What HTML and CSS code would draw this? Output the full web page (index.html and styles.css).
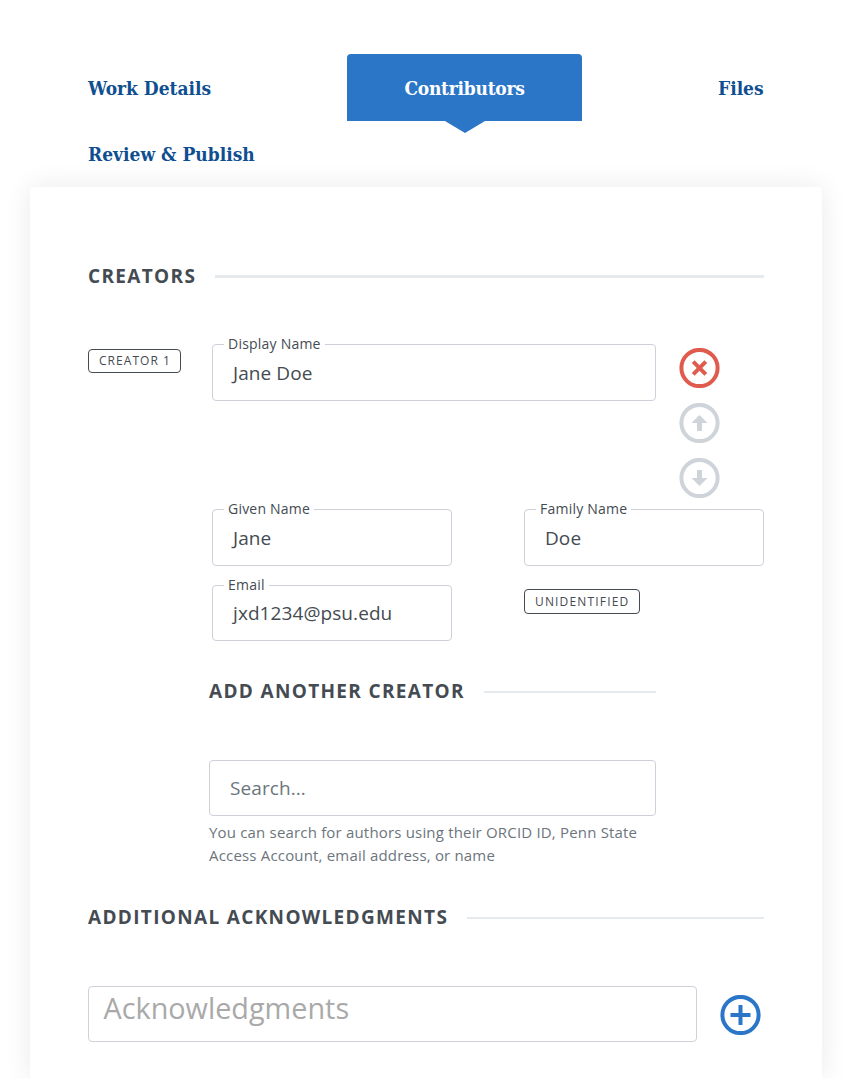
FILE: index.html
```html
<!DOCTYPE html>
<html lang="en">
<head>
<meta charset="utf-8">
<title>Contributors</title>
<link rel="stylesheet" href="styles.css">
</head>
<body>
<nav class="tabs">
  <a class="tab">Work Details</a>
  <a class="tab active">Contributors</a>
  <a class="tab files">Files</a>
  <a class="tab review">Review &amp; Publish</a>
</nav>
<main class="card">
  <h2 class="heading thick"><span>Creators</span></h2>
  <section class="creator">
    <div><span class="badge number">Creator 1</span></div>
    <div class="fields">
      <div class="top">
        <label class="field"><span class="label">Display Name</span><span class="value">Jane Doe</span></label>
        <div class="actions">
          <svg class="icon remove" viewBox="0 0 40 40"><circle cx="20" cy="20" r="18.100"/><path d="M13.700 13.700l12.600 12.600M26.300 13.700L13.700 26.300"/></svg>
          <svg class="icon move" viewBox="0 0 40 40"><circle cx="20" cy="20" r="18.100"/><path class="solid" d="M20 12l8 8h-5.500v8h-5v-8H12z"/></svg>
          <svg class="icon move" viewBox="0 0 40 40"><circle cx="20" cy="20" r="18.100"/><path class="solid" d="M20 28l8-8h-5.500v-8h-5v8H12z"/></svg>
        </div>
      </div>
      <div class="pair">
        <label class="field"><span class="label">Given Name</span><span class="value">Jane</span></label>
        <label class="field"><span class="label">Family Name</span><span class="value">Doe</span></label>
        <label class="field email"><span class="label">Email</span><span class="value">jxd1234@psu.edu</span></label>
        <div><span class="badge status">Unidentified</span></div>
      </div>
    </div>
  </section>
  <section class="add">
    <h2 class="heading"><span>Add Another Creator</span></h2>
    <div class="field search"><span class="value">Search...</span></div>
    <p class="help">You can search for authors using their ORCID ID, Penn State Access Account, email address, or name</p>
  </section>
  <h2 class="heading ack-title"><span>Additional Acknowledgments</span></h2>
  <div class="ack">
    <div class="field"><span class="placeholder">Acknowledgments</span></div>
    <svg class="icon plus" viewBox="0 0 40 40"><circle cx="20" cy="20" r="18.100"/><path d="M20 10v20M10 20h20"/></svg>
  </div>
</main>
</body>
</html>
```
FILE: styles.css
```css
* { box-sizing: border-box; }
body {
  margin: 0;
  height: 1079px;
  overflow: hidden;
  padding: 54px 25px 0 30px;
  background: #fff;
  color: #444b52;
  font-family: "Open Sans", sans-serif;
}
.tabs {
  display: flex;
  flex-wrap: wrap;
  justify-content: space-between;
  align-content: flex-start;
  column-gap: 57px;
  height: 133px;
  padding: 0 58px;
  font: bold 19px/69px "Roboto Slab", "DejaVu Serif Condensed", "DejaVu Serif", serif;
  color: #0f4f91;
}
.tab { height: 67px; width: 123px; white-space: nowrap; }
.tab.active {
  position: relative;
  width: 235px;
  text-align: center;
  letter-spacing: -.25px;
  color: #fff;
  background: #2b76c7;
  border-radius: 4px 4px 0 0;
}
.tab.active::after {
  content: "";
  position: absolute;
  left: 98px;
  top: 67px;
  border: solid transparent;
  border-width: 12px 20px 0;
  border-top-color: #2b76c7;
}
.tab.files { width: 46px; }
.tab.review { width: 167px; height: 66px; line-height: 67px; }
.card {
  height: 892px;
  padding: 74px 58px 0;
  border-radius: 4px 4px 0 0;
  background: #fff;
  box-shadow: 0 0 28px rgba(0, 0, 0, .085);
}
.heading {
  display: flex;
  align-items: center;
  gap: 19px;
  height: 28px;
  margin: 0;
  font-size: 19px;
  line-height: 28px;
  font-weight: 700;
  letter-spacing: 1.33px;
  text-transform: uppercase;
  white-space: nowrap;
}
.heading::after {
  content: "";
  flex: 1;
  height: 2px;
  margin-top: 2px;
  background: #e7eaed;
}
.heading.thick span { padding-top: 2px; }
.heading.thick::after { height: 3px; }
.creator {
  display: grid;
  grid-template-columns: 124px 552px;
  margin-top: 55px;
}
.badge {
  display: flex;
  align-items: center;
  padding-left: 10px;
  border: 1px solid #444b52;
  border-radius: 4px;
  font-size: 12px;
  line-height: 20px;
  letter-spacing: 1.04px;
  text-transform: uppercase;
}
.number { width: 93px; height: 24px; margin-top: 5px; }
.status { width: 116px; height: 25px; margin-top: 4px; letter-spacing: 1.16px; }
.top {
  display: grid;
  grid-template-columns: 444px 41px;
  gap: 23px;
  height: 165px;
}
.field {
  position: relative;
  display: block;
  height: 57px;
  padding: 0 20px;
  border: 1px solid #ced1d9;
  border-radius: 4px;
}
.label {
  position: absolute;
  left: 11px;
  top: -11px;
  padding: 0 4px;
  background: #fff;
  font-size: 14px;
  line-height: 20px;
  letter-spacing: .22px;
}
.value {
  display: block;
  font-size: 19px;
  line-height: 57px;
  letter-spacing: .08px;
}
.actions { display: flex; flex-direction: column; gap: 15px; padding-top: 4px; }
.icon { width: 41px; height: 40px; fill: none; stroke-width: 4; flex: none; }
.remove { stroke: #de5b4d; }
.move { stroke: #ced4da; }
.icon .solid { fill: #ced4da; stroke: none; }
.plus { margin-top: 2px; stroke: #2b76c7; }
.pair { display: grid; grid-template-columns: 240px 240px; column-gap: 72px; row-gap: 19px; }
.email { height: 56px; }
.email .value { line-height: 55px; }
.add { width: 447px; margin: 36px 0 0 121px; }
.search { height: 56px; margin-top: 55px; color: #6c757d; }
.search .value { line-height: 55px; }
.help {
  margin: 5px 0 0;
  color: #6c757d;
  font-size: 15px;
  line-height: 23px;
  letter-spacing: .18px;
}
.ack-title { margin-top: 36px; }
.ack { display: flex; align-items: center; gap: 23px; margin-top: 55px; }
.ack .field { width: 609px; height: 56px; padding: 0 14.5px; }
.placeholder { display: block; color: #a9a9a9; font-size: 28.8px; line-height: 42px; }
```
